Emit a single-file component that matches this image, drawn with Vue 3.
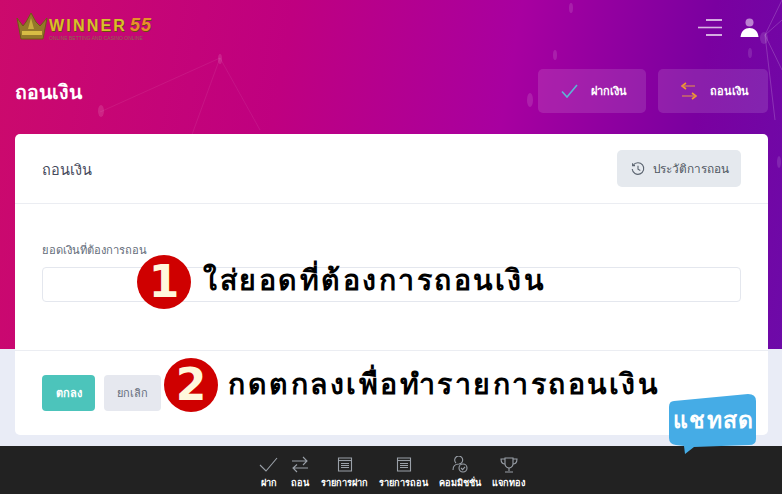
<template>
  <div class="page">
    <!-- hero background -->
    <div class="hero">
      <svg class="hero-lines" viewBox="0 0 782 349" width="782" height="349">
        <g stroke="#fff" stroke-opacity="0.07" fill="none">
          <path d="M100 112 L220 58 L190 140" />
          <path d="M220 58 L260 130" />
          <path d="M765 35 L782 0 M765 35 L782 20 M765 35 L782 70 M765 35 L775 120" stroke-opacity="0.18" />
        </g>
        <g fill="#fff" fill-opacity="0.12">
          <ellipse cx="220" cy="59" rx="2" ry="5" />
          <ellipse cx="101" cy="111" rx="3" ry="6" />
          <ellipse cx="571" cy="8" rx="2" ry="5" />
          <ellipse cx="555" cy="55" rx="2" ry="5" />
          <ellipse cx="530" cy="100" rx="3" ry="7" />
          <ellipse cx="750" cy="53" rx="2" ry="5" />
          <ellipse cx="764" cy="38" rx="4" ry="6" />
          <ellipse cx="779" cy="162" rx="2" ry="6" />
        </g>
      </svg>
    </div>

    <header class="topbar">
      <div class="logo">
        <svg width="32" height="28" viewBox="0 0 32 28">
          <path d="M1 5 L7 13 L10 9 L15 0 L20 9 L24 13 L31 5 L27 26 L5 26 Z" fill="#94782a" stroke="#6f5a14" stroke-width="1" />
          <rect x="6" y="18" width="20" height="4" fill="#d8bc44" />
          <path d="M12 16 L15 5 L18 16 Z" fill="#c9ae3e" />
        </svg>
        <div class="logo-text">
          <div class="logo-name">WINNER<span class="logo-num">55</span></div>
          <div class="logo-sub">ONLINE BETTING AND CASINO ONLINE</div>
        </div>
      </div>
      <div class="top-icons">
        <svg width="24" height="20" viewBox="0 0 24 20">
          <g stroke="#fff" stroke-width="1.6">
            <path d="M8 2 H24" stroke-opacity="0.85" />
            <path d="M0 9.5 H24" stroke-opacity="0.7" />
            <path d="M8 17 H24" stroke-opacity="0.85" />
          </g>
        </svg>
        <svg width="19" height="20" viewBox="0 0 19 20">
          <circle cx="9.5" cy="4.5" r="4" fill="#fff" fill-opacity="0.5" />
          <path d="M0.5 19 C1 13 5 10 9.5 10 C14 10 18 13 18.5 19 Z" fill="#fff" />
        </svg>
      </div>
    </header>

    <div class="title-row">
      <h1 class="page-title">ถอนเงิน</h1>
      <div class="quick-btns">
        <button class="quick q1">
          <svg width="17" height="14" viewBox="0 0 17 14"><path d="M1 7.5 L6 13 L16 1" fill="none" stroke="#5cb6d6" stroke-width="1.6" /></svg>
          <span>ฝากเงิน</span>
        </button>
        <button class="quick q2">
          <svg width="16" height="20" viewBox="0 0 16 20">
            <path d="M5 2 L1 5 L5 8" fill="none" stroke="#f39a2b" stroke-width="1.6" />
            <path d="M1 5 H14" fill="none" stroke="#e08a50" stroke-opacity="0.7" stroke-width="1.6" />
            <path d="M11 12 L15 15 L11 18" fill="none" stroke="#f39a2b" stroke-width="1.6" />
            <path d="M15 15 H1" fill="none" stroke="#e08a50" stroke-opacity="0.7" stroke-width="1.6" />
          </svg>
          <span>ถอนเงิน</span>
        </button>
      </div>
    </div>

    <section class="card">
      <div class="card-head">
        <span class="card-title">ถอนเงิน</span>
        <button class="history">
          <svg width="14" height="14" viewBox="0 0 14 14" fill="none" stroke="#5b6470" stroke-width="1.1">
            <path d="M2.2 3.2 A5.8 5.8 0 1 1 1.2 7" />
            <path d="M1.6 1.2 V3.6 H4" />
            <path d="M7 3.8 V7.2 L9.3 8.5" />
          </svg>
          <span>ประวัติการถอน</span>
        </button>
      </div>
      <div class="card-body">
        <label class="field-label">ยอดเงินที่ต้องการถอน</label>
        <div class="field"></div>
      </div>
      <div class="card-foot">
        <button class="btn ok">ตกลง</button>
        <button class="btn cancel">ยกเลิก</button>
      </div>
    </section>

    <!-- tutorial marks drawn over the screenshot -->
    <div class="mark m1">1</div>
    <div class="note n1">ใส่ยอดที่ต้องการถอนเงิน</div>
    <div class="mark m2">2</div>
    <div class="note n2">กดตกลงเพื่อทำรายการถอนเงิน</div>

    <div class="chat">
      <svg width="90" height="62" viewBox="0 0 90 62">
        <path d="M6 8 L80 1 Q88 1 88 8 L88 46 Q88 52 81 52 L26 54 L17 61 L16 53 L8 52 Q1 51 1 45 L1 14 Q1 8 6 8 Z" fill="#45ace6" />
      </svg>
      <span class="chat-text">แชทสด</span>
    </div>

    <nav class="bottom">
      <div v-for="item in navItems" :key="item.label" class="nav-item">
        <svg width="20" height="18" viewBox="0 0 20 18" fill="none" stroke="#9aa0a8" stroke-width="1.1">
          <path v-for="d in item.paths" :key="d" :d="d" />
        </svg>
        <span>{{ item.label }}</span>
      </div>
    </nav>
  </div>
</template>

<script setup>
const calendar = [
  "M3.5 2 H16.5 V15 H3.5 Z",
  "M3.5 4.5 H16.5",
  "M6 7.5 H14 M6 9.5 H14 M6 11.5 H14",
];

const navItems = [
  { label: "ฝาก", paths: ["M1 9 L7 15 L18 2"] },
  { label: "ถอน", paths: ["M2 5 H17 M13 1 L17 5 L13 9", "M18 12 H3 M7 8.5 L3 12 L7 16"] },
  { label: "รายการฝาก", paths: calendar },
  { label: "รายการถอน", paths: calendar },
  { label: "คอมมิชชั่น", paths: ["M3 14 C3 9 6 8 9 8 A4 4 0 1 0 6 7", "M17 12 A4 4 0 1 1 9 12 A4 4 0 1 1 17 12 Z", "M11 12 L12.6 13.6 L15 10.8"] },
  { label: "แจกทอง", paths: ["M6 2 H14 V8 C14 11 11 12 10 12 C9 12 6 11 6 8 Z", "M6 3 H2 C2 7 4 8 6 8 M14 3 H18 C18 7 16 8 14 8", "M10 12 V15 M6 16 H14"] },
];
</script>

<style>
html, body {
  margin: 0;
  background: #e9ecf6;
  overflow: hidden;
}
</style>

<style scoped>
.page {
  position: relative;
  width: 782px;
  height: 494px;
  overflow: hidden;
  display: flex;
  flex-direction: column;
  background: #e9ecf6;
  font-family: "Noto Sans", "Liberation Sans", sans-serif;
}

.hero {
  position: absolute;
  left: 0;
  top: 0;
  width: 100%;
  height: 349px;
  background: linear-gradient(100deg, #cc0a6c 0%, #bf0080 35%, #a800a0 62%, #7a00a0 85%, #6d0aa8 100%);
}

.hero-lines {
  display: block;
}

.topbar {
  position: relative;
  height: 69px;
  display: flex;
  justify-content: space-between;
  padding: 13px 23px 0 16px;
  box-sizing: border-box;
}

.logo {
  display: flex;
  gap: 1px;
  height: 28px;
}

.logo-name {
  font-family: "Liberation Sans", sans-serif;
  font-weight: 700;
  font-size: 16px;
  line-height: 16px;
  letter-spacing: 2.2px;
  color: #d8bf2c;
  margin-top: 4px;
  text-shadow: 0.5px 0.5px 0 #6a4a10;
  white-space: nowrap;
}

.logo-num {
  font-style: italic;
  color: #e8902a;
  margin-left: 3px;
  font-size: 18px;
  letter-spacing: 1px;
}

.logo-sub {
  font-family: "Liberation Sans", sans-serif;
  font-size: 5px;
  line-height: 8px;
  color: #8a6a50;
  white-space: nowrap;
}

.top-icons {
  display: flex;
  gap: 18px;
  padding-top: 5px;
}

.title-row {
  position: relative;
  height: 65px;
  display: flex;
  justify-content: space-between;
  padding: 0 14px 0 15px;
}

.page-title {
  margin: 0;
  color: #fff;
  font-size: 19.5px;
  font-weight: 600;
  line-height: 45px;
}

.quick-btns {
  display: flex;
  gap: 12px;
}

.quick {
  height: 44px;
  border: none;
  border-radius: 5px;
  background: rgba(255, 255, 255, 0.12);
  color: #fff;
  font-family: inherit;
  font-size: 11px;
  font-weight: 700;
  display: flex;
  align-items: center;
  padding: 0;
}

.q1 {
  width: 108px;
  padding-left: 23px;
  gap: 13px;
}

.q2 {
  width: 110px;
  padding-left: 23px;
  gap: 13px;
}

.card {
  position: relative;
  margin: 0 14px 0 15px;
  height: 301px;
  background: #fff;
  border-radius: 5px;
  display: flex;
  flex-direction: column;
}

.card-head {
  height: 70px;
  box-sizing: border-box;
  border-bottom: 1px solid #ebedf2;
  display: flex;
  align-items: center;
  justify-content: space-between;
  padding: 0 27px;
}

.card-title {
  font-size: 14.5px;
  color: #464a5c;
  padding-top: 1px;
}

.history {
  width: 124px;
  height: 37px;
  border: none;
  border-radius: 5px;
  background: #e5e9ee;
  color: #4d5560;
  font-family: inherit;
  font-size: 11.8px;
  display: flex;
  align-items: center;
  justify-content: center;
  gap: 8px;
  padding: 0 0 0 2px;
}

.card-body {
  height: 147px;
  box-sizing: border-box;
  padding: 37px 27px 0;
  border-bottom: 1px solid #ebedf2;
}

.field-label {
  display: block;
  font-size: 11.2px;
  line-height: 18px;
  color: #646c7a;
  margin-bottom: 8px;
}

.field {
  height: 35px;
  box-sizing: border-box;
  border: 1px solid #e4e7ee;
  border-radius: 4px;
}

.card-foot {
  flex: 1;
  display: flex;
  gap: 9px;
  padding: 24px 27px 0;
}

.btn {
  height: 36px;
  border: none;
  border-radius: 4px;
  font-family: inherit;
  font-size: 11px;
  padding: 0;
}

.ok {
  width: 53px;
  background: #4cc4bb;
  color: #fff;
  font-weight: 700;
}

.cancel {
  width: 57px;
  background: #e6e8ef;
  color: #646c7a;
}

.mark {
  position: absolute;
  width: 54px;
  height: 54px;
  border-radius: 50%;
  background: #cf0000;
  color: #fff8dc;
  font-family: "DejaVu Sans", sans-serif;
  font-weight: 700;
  font-size: 44px;
  line-height: 54px;
  text-align: center;
}

.m1 {
  left: 137px;
  top: 255px;
}

.m2 {
  left: 164px;
  top: 358px;
}

.note {
  position: absolute;
  color: #000;
  font-weight: 700;
  font-size: 28.5px;
  line-height: 36px;
  white-space: nowrap;
  letter-spacing: 2.5px;
}

.n1 {
  left: 203px;
  top: 261px;
}

.n2 {
  left: 228px;
  top: 365px;
}

.chat {
  position: absolute;
  left: 668px;
  top: 393px;
  width: 90px;
  height: 62px;
  z-index: 2;
}

.chat svg {
  display: block;
}

.chat-text {
  position: absolute;
  left: 5px;
  top: 7px;
  color: #fff;
  font-weight: 700;
  font-size: 23px;
  line-height: 38px;
  letter-spacing: 1.3px;
  white-space: nowrap;
}

.bottom {
  position: absolute;
  left: 0;
  right: 0;
  bottom: 0;
  height: 48px;
  background: #222;
  display: flex;
  justify-content: center;
  gap: 11px;
  padding: 10px 0 0 2px;
  box-sizing: border-box;
}

.nav-item {
  display: flex;
  flex-direction: column;
  align-items: center;
  color: #fff;
  font-size: 9.2px;
  font-weight: 700;
  line-height: 13px;
  white-space: nowrap;
}

.nav-item svg {
  display: block;
  margin-bottom: 2px;
}
</style>
